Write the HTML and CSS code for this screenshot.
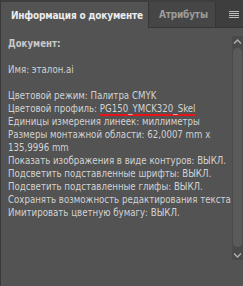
FILE: index.html
```html
<!DOCTYPE html>
<html lang="ru">
<head>
    <meta charset="UTF-8">
    <title>Информация о документе</title>
    <link rel="stylesheet" href="styles.css">
</head>
<body>
    <div class="panel">
        <div class="tabs">
            <div class="tab active">Информация о документе</div>
            <div class="tab">Атрибуты</div>
            <div class="spacer"></div>
            <div class="menu">
                <svg width="10" height="8" viewBox="0 0 10 8">
                    <rect x="0" y="0" width="10" height="1" fill="#bdbdbd"/>
                    <rect x="0" y="2" width="10" height="1" fill="#bdbdbd"/>
                    <rect x="0" y="4" width="10" height="1" fill="#bdbdbd"/>
                    <rect x="0" y="6" width="10" height="1" fill="#bdbdbd"/>
                </svg>
            </div>
        </div>
        <div class="body">
            <div class="content">
                <p class="head">Документ:</p>
                <p>&nbsp;</p>
                <p>Имя: эталон.ai</p>
                <p>&nbsp;</p>
                <p>Цветовой режим: Палитра CMYK</p>
                <p>Цветовой профиль: <span class="mark">PG150_YMCK320_Skel</span></p>
                <p>Единицы измерения линеек: миллиметры</p>
                <p>Размеры монтажной области: 62,0007 mm x 135,9996 mm</p>
                <p>Показать изображения в виде контуров: ВЫКЛ.</p>
                <p>Подсветить подставленные шрифты: ВЫКЛ.</p>
                <p>Подсветить подставленные глифы: ВЫКЛ.</p>
                <p class="nowrap">Сохранять возможность редактирования текста</p>
                <p>Имитировать цветную бумагу: ВЫКЛ.</p>
            </div>
            <div class="scroll">
                <div class="arrow">
                    <svg width="9" height="5" viewBox="0 0 9 5"><path d="M1 4.5 L4.5 1 L8 4.5" stroke="#b0b0b0" stroke-width="1.4" fill="none"/></svg>
                </div>
                <div class="thumb"></div>
                <div class="arrow">
                    <svg width="9" height="5" viewBox="0 0 9 5"><path d="M1 0.5 L4.5 4 L8 0.5" stroke="#b0b0b0" stroke-width="1.4" fill="none"/></svg>
                </div>
            </div>
        </div>
    </div>
</body>
</html>
```

FILE: styles.css
```css
html, body {
    margin: 0;
    height: 100%;
    background: #535353;
}

.panel {
    height: 286px;
    display: flex;
    flex-direction: column;
    font-family: "DejaVu Sans Condensed", "DejaVu Sans", sans-serif;
    border-left: 1px solid #3a3a3a;
}

/* ONGLETS */
.tabs {
    display: flex;
    height: 28px;
    padding-top: 2px;
    box-sizing: border-box;
    background: #3e3e3e;
}

.tab {
    display: flex;
    align-items: center;
    padding: 0 7px 0 10px;
    font-size: 10px;
    letter-spacing: -0.2px;
    font-weight: bold;
    white-space: nowrap;
    color: #9c9c9c;
    background: #464646;
    border-right: 1px solid #363636;
    border-bottom: 1px solid #363636;
}

.tab.active {
    width: 130px;
    color: #ececec;
    background: #535353;
    border-bottom: none;
}

.spacer {
    flex: 1;
    border-bottom: 1px solid #363636;
}

.menu {
    display: flex;
    align-items: center;
    padding: 0 4px 0 0;
    border-bottom: 1px solid #363636;
}

/* CONTENU */
.body {
    flex: 1;
    display: flex;
    min-height: 0;
}

.content {
    flex: 1;
    overflow: hidden;
    padding: 9px 0 0 7px;
    font-size: 9.6px;
    line-height: 13px;
    color: #d2d2d2;
}

.content p {margin: 0;}
.content .head {font-weight: bold; color: #c8c8c8;}
.nowrap {white-space: nowrap;}

.mark {
    border-bottom: 2px solid #e8141a;
}

/* DEFILEMENT */
.scroll {
    width: 11px;
    margin-top: 8px;
    height: 224px;
    display: flex;
    flex-direction: column;
    background: #4a4a4a;
}

.arrow {
    height: 10px;
    display: flex;
    align-items: center;
    justify-content: center;
}

.thumb {
    flex: 1;
    margin: 2px 1px 3px;
    background: #5a5a5a;
    border-radius: 5px;
}
```
